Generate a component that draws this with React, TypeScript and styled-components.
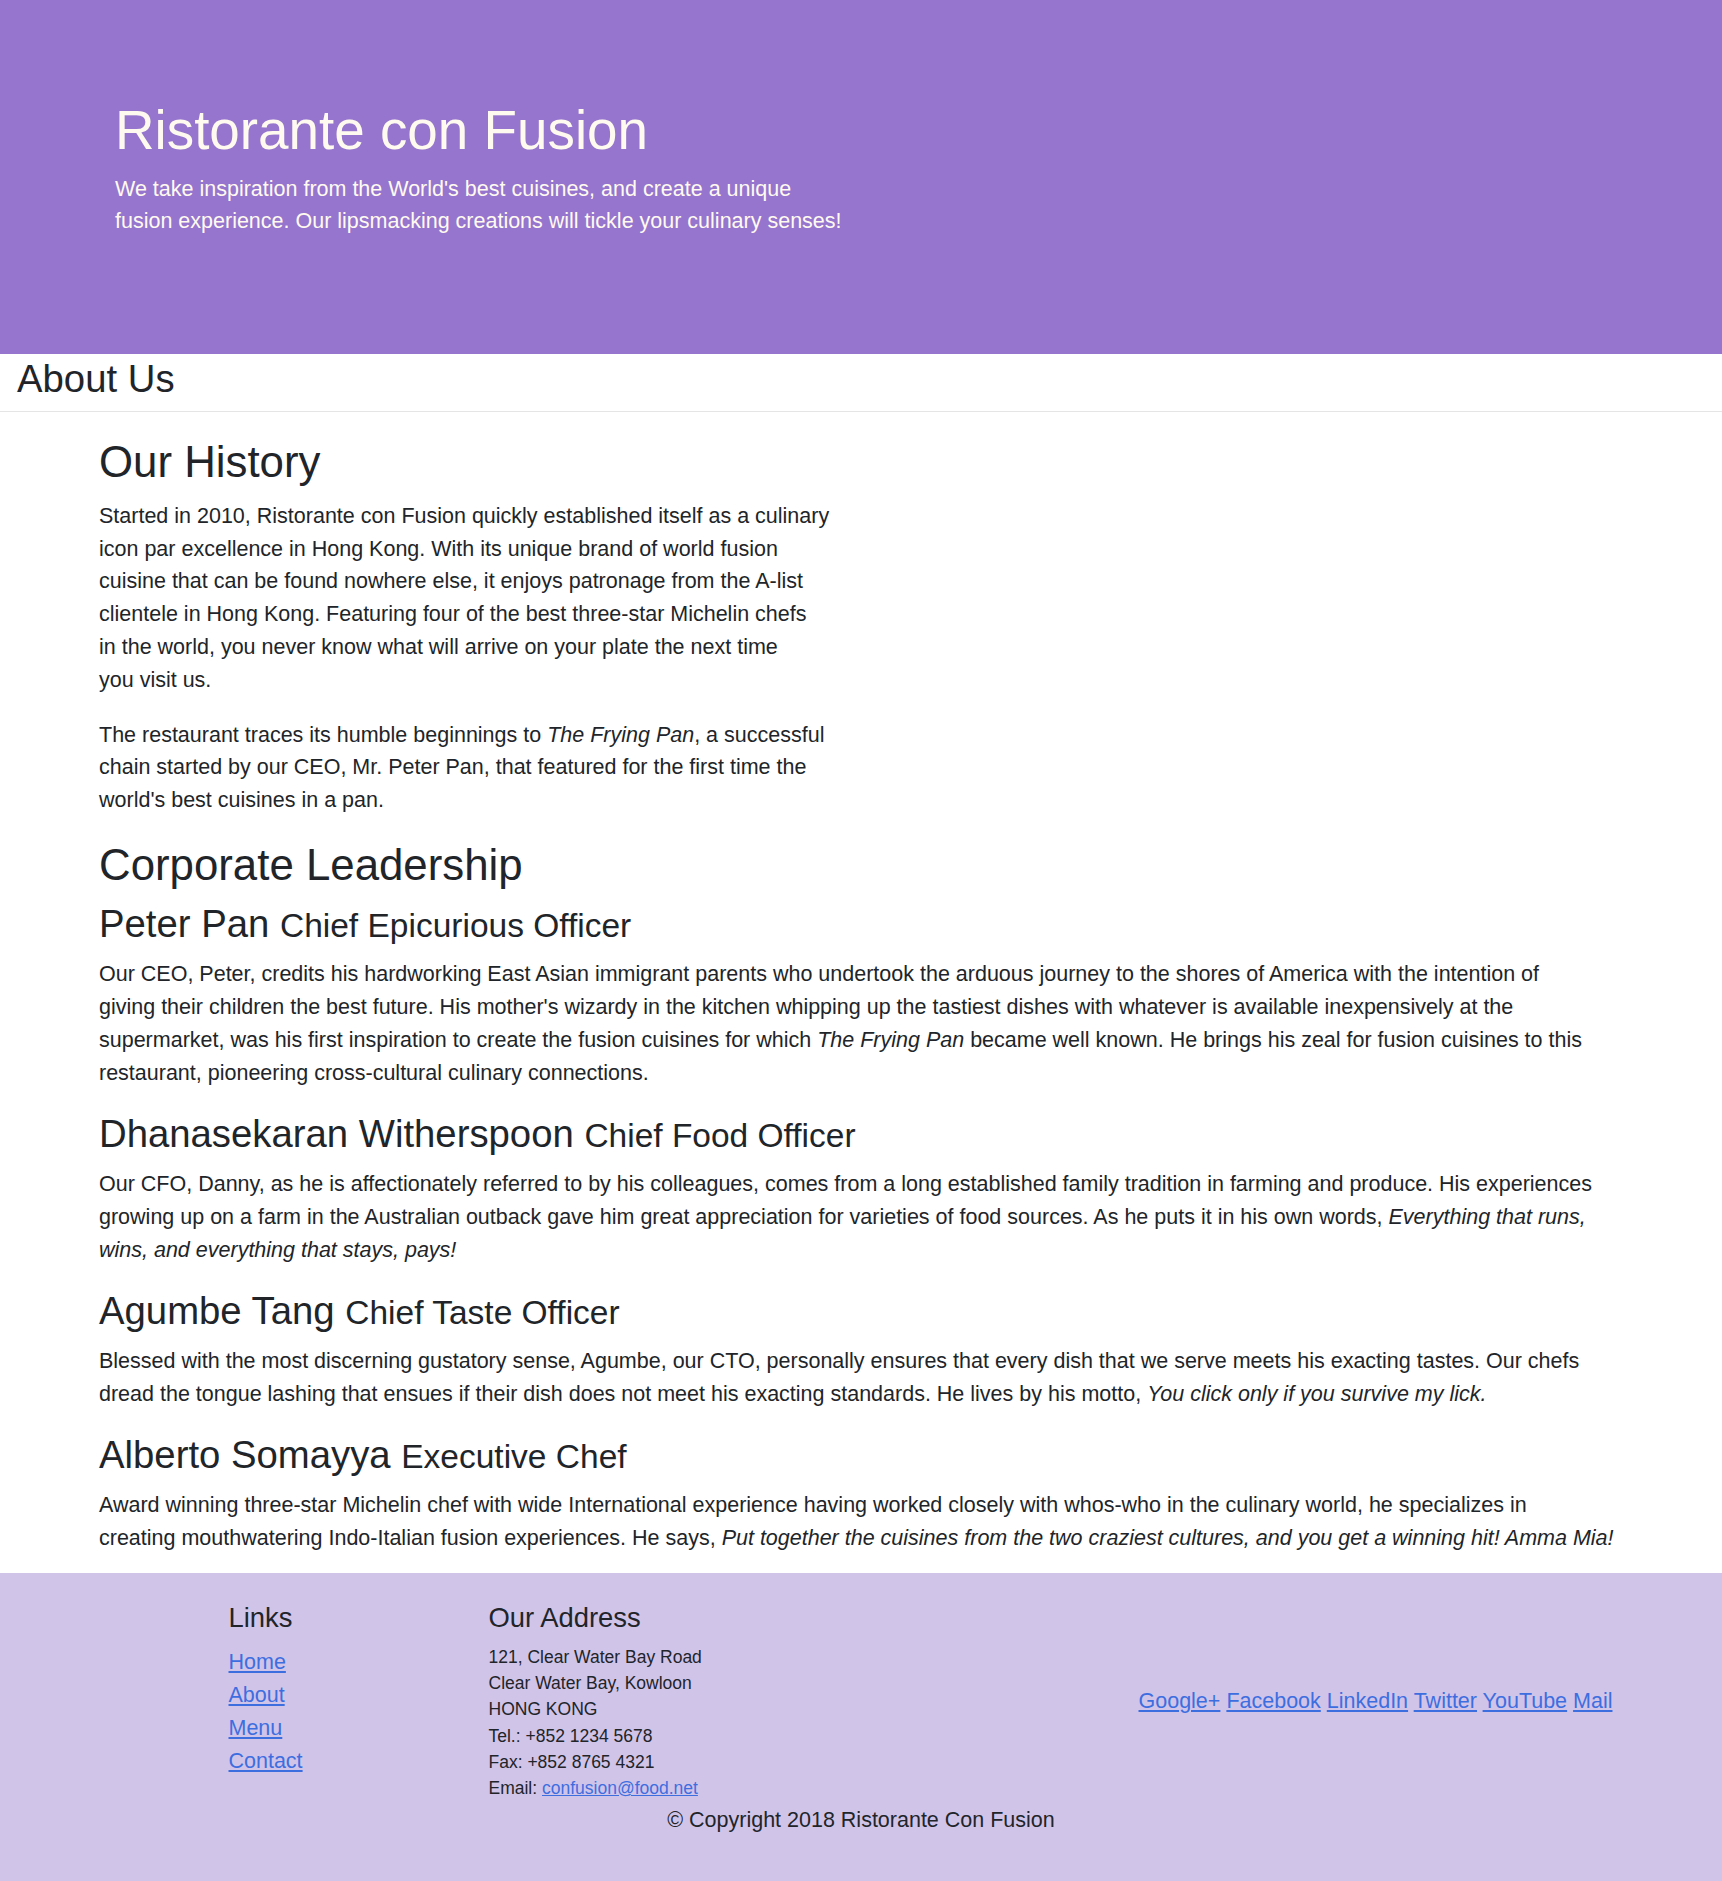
import React from "react";
import styled, { createGlobalStyle } from "styled-components";

const GlobalStyle = createGlobalStyle`
  html, body { margin: 0; padding: 0; }
  *, *::before, *::after { box-sizing: border-box; }
  body {
    font-family: "Liberation Sans", Arial, sans-serif;
    font-size: 21.5px;
    line-height: 32.85px;
    color: #212529;
    background: #ffffff;
  }
`;

const Jumbotron = styled.header`
  background: #9575cd;
  color: #fffaf0;
  padding: 95.8px 0 94px;
`;

const Container = styled.div`
  width: 1558px;
  margin: 0 auto;
  padding: 0 20.5px 0 17px;
`;

const HeaderCol = styled.div`
  width: 739px;
  padding-left: 16px;
`;

const Title = styled.h1`
  font-size: 54.8px;
  line-height: 65.7px;
  font-weight: 500;
  margin: 0 0 9px;
  padding-top: 2px;
`;

const Tagline = styled.p`
  margin: 0 0 21.9px;
  white-space: nowrap;
`;

const PageHead = styled.div`
  padding-left: 17px;
`;

const PageTitle = styled.h3`
  font-size: 38.3px;
  line-height: 46px;
  font-weight: 500;
  margin: 0 0 9px;
  padding-top: 2px;
`;

const Divider = styled.hr`
  margin: 0 0 24px;
  border: 0;
  border-top: 1px solid rgba(0, 0, 0, 0.1);
`;

const HistoryCol = styled.section`
  width: 739px;
`;

const SectionTitle = styled.h2<{ $gap?: number }>`
  font-size: 43.8px;
  line-height: 52.6px;
  font-weight: 500;
  margin: 0 0 ${(p) => p.$gap ?? 11}px;
`;

const Paragraph = styled.p`
  margin: 0 0 21.9px;
  white-space: nowrap;
`;

const LeaderList = styled.div`
  display: flex;
  flex-direction: column;
  gap: 21.1px;
  padding-bottom: 17.9px;
`;

const Leader = styled.article`
  display: flex;
  flex-direction: column;
  gap: 11.4px;
`;

const LeaderName = styled.h3`
  font-size: 38.3px;
  line-height: 46px;
  font-weight: 500;
  margin: 0;
`;

const Designation = styled.span`
  font-size: 33.5px;
  line-height: 1;
`;

const LeaderText = styled.p`
  margin: 0;
  white-space: nowrap;
`;

const Footer = styled.footer`
  background: #d1c4e9;
  padding: 29.8px 0 27.4px;
`;

const FooterRow = styled.div`
  width: 1561px;
  margin: 0 auto;
  display: grid;
  grid-template-columns: 127.5px 260px 650px 523.5px;
`;

const FooterCol = styled.div<{ $start: number; $center?: boolean }>`
  grid-column: ${(p) => p.$start};
  padding: 0 20.5px;
  align-self: ${(p) => (p.$center ? "center" : "start")};
  white-space: nowrap;
`;

const FooterHeading = styled.h5<{ $gap: number }>`
  font-size: 27.4px;
  line-height: 32.9px;
  font-weight: 500;
  margin: 0 0 ${(p) => p.$gap}px;
`;

const LinkList = styled.ul`
  list-style: none;
  margin: 0;
  padding: 0;
`;

const Link = styled.a`
  color: #3d6ee0;
  text-decoration: underline;
`;

const Address = styled.address`
  font-style: normal;
  font-size: 17.5px;
  line-height: 26.2px;
  margin: 0;
`;

const CopyrightRow = styled.div`
  display: flex;
  justify-content: center;
  padding-top: 2.4px;
`;

const Copyright = styled.p`
  margin: 0 0 21.9px;
`;

const Lines = ({ lines }: { lines: React.ReactNode[] }) => (
  <>
    {lines.map((l, i) => (
      <React.Fragment key={i}>
        {i > 0 && <br />}
        {l}
      </React.Fragment>
    ))}
  </>
);

type LeaderData = { name: string; title: string; lines: React.ReactNode[] };

const leaders: LeaderData[] = [
  {
    name: "Peter Pan",
    title: "Chief Epicurious Officer",
    lines: [
      "Our CEO, Peter, credits his hardworking East Asian immigrant parents who undertook the arduous journey to the shores of America with the intention of",
      "giving their children the best future. His mother's wizardy in the kitchen whipping up the tastiest dishes with whatever is available inexpensively at the",
      <>
        supermarket, was his first inspiration to create the fusion cuisines for which <em>The Frying Pan</em> became well known. He brings his zeal for fusion cuisines to this
      </>,
      "restaurant, pioneering cross-cultural culinary connections.",
    ],
  },
  {
    name: "Dhanasekaran Witherspoon",
    title: "Chief Food Officer",
    lines: [
      "Our CFO, Danny, as he is affectionately referred to by his colleagues, comes from a long established family tradition in farming and produce. His experiences",
      <>
        growing up on a farm in the Australian outback gave him great appreciation for varieties of food sources. As he puts it in his own words, <em>Everything that runs,</em>
      </>,
      <em>wins, and everything that stays, pays!</em>,
    ],
  },
  {
    name: "Agumbe Tang",
    title: "Chief Taste Officer",
    lines: [
      "Blessed with the most discerning gustatory sense, Agumbe, our CTO, personally ensures that every dish that we serve meets his exacting tastes. Our chefs",
      <>
        dread the tongue lashing that ensues if their dish does not meet his exacting standards. He lives by his motto, <em>You click only if you survive my lick.</em>
      </>,
    ],
  },
  {
    name: "Alberto Somayya",
    title: "Executive Chef",
    lines: [
      "Award winning three-star Michelin chef with wide International experience having worked closely with whos-who in the culinary world, he specializes in",
      <>
        creating mouthwatering Indo-Italian fusion experiences. He says, <em>Put together the cuisines from the two craziest cultures, and you get a winning hit! Amma Mia!</em>
      </>,
    ],
  },
];

const socials = ["Google+", "Facebook", "LinkedIn", "Twitter", "YouTube", "Mail"];
const navLinks = ["Home", "About", "Menu", "Contact"];

export default function App() {
  return (
    <>
      <GlobalStyle />
      <Jumbotron>
        <Container>
          <HeaderCol>
            <Title>Ristorante con Fusion</Title>
            <Tagline>
              <Lines
                lines={[
                  "We take inspiration from the World's best cuisines, and create a unique",
                  "fusion experience. Our lipsmacking creations will tickle your culinary senses!",
                ]}
              />
            </Tagline>
          </HeaderCol>
        </Container>
      </Jumbotron>

      <PageHead>
        <PageTitle>About Us</PageTitle>
      </PageHead>
      <Divider />

      <Container as="main">
        <HistoryCol>
          <SectionTitle>Our History</SectionTitle>
          <Paragraph>
            <Lines
              lines={[
                "Started in 2010, Ristorante con Fusion quickly established itself as a culinary",
                "icon par excellence in Hong Kong. With its unique brand of world fusion",
                "cuisine that can be found nowhere else, it enjoys patronage from the A-list",
                "clientele in Hong Kong. Featuring four of the best three-star Michelin chefs",
                "in the world, you never know what will arrive on your plate the next time",
                "you visit us.",
              ]}
            />
          </Paragraph>
          <Paragraph>
            <Lines
              lines={[
                <>
                  The restaurant traces its humble beginnings to <em>The Frying Pan</em>, a successful
                </>,
                "chain started by our CEO, Mr. Peter Pan, that featured for the first time the",
                "world's best cuisines in a pan.",
              ]}
            />
          </Paragraph>
        </HistoryCol>

        <SectionTitle $gap={9}>Corporate Leadership</SectionTitle>
        <LeaderList>
          {leaders.map((l) => (
            <Leader key={l.name}>
              <LeaderName>
                {l.name} <Designation>{l.title}</Designation>
              </LeaderName>
              <LeaderText>
                <Lines lines={l.lines} />
              </LeaderText>
            </Leader>
          ))}
        </LeaderList>
      </Container>

      <Footer>
        <FooterRow>
          <FooterCol $start={2}>
            <FooterHeading $gap={11}>Links</FooterHeading>
            <LinkList>
              {navLinks.map((n) => (
                <li key={n}>
                  <Link href="#">{n}</Link>
                </li>
              ))}
            </LinkList>
          </FooterCol>
          <FooterCol $start={3}>
            <FooterHeading $gap={8.6}>Our Address</FooterHeading>
            <Address>
              121, Clear Water Bay Road
              <br />
              Clear Water Bay, Kowloon
              <br />
              HONG KONG
              <br />
              Tel.: +852 1234 5678
              <br />
              Fax: +852 8765 4321
              <br />
              Email: <Link href="#">confusion@food.net</Link>
            </Address>
          </FooterCol>
          <FooterCol $start={4} $center>
            {socials.map((s, i) => (
              <React.Fragment key={s}>
                {i > 0 && " "}
                <Link href="#">{s}</Link>
              </React.Fragment>
            ))}
          </FooterCol>
        </FooterRow>
        <CopyrightRow>
          <Copyright>© Copyright 2018 Ristorante Con Fusion</Copyright>
        </CopyrightRow>
      </Footer>
    </>
  );
}
